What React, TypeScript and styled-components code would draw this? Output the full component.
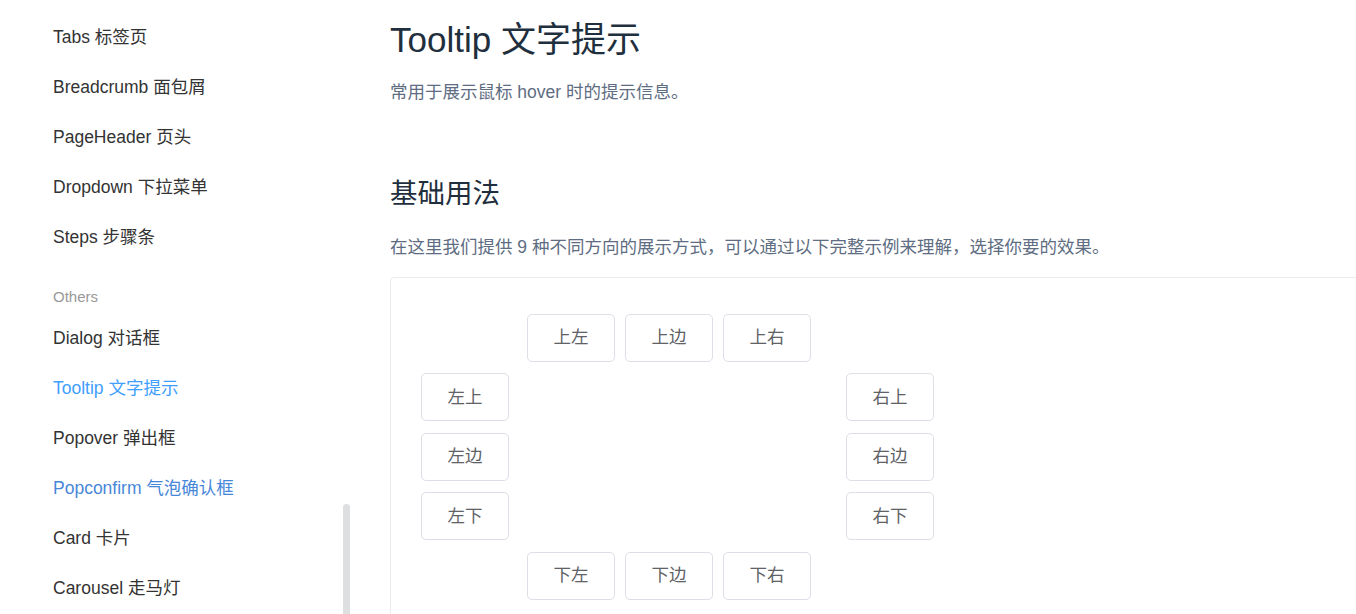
import React from "react";
import styled, { createGlobalStyle } from "styled-components";

const Global = createGlobalStyle`
  html, body { margin: 0; padding: 0; background: #fff; overflow: hidden; }
  body {
    font-family: "Liberation Sans", Arial, "Noto Sans CJK SC", sans-serif;
    -webkit-font-smoothing: antialiased;
  }
  * { box-sizing: border-box; }
`;

const Page = styled.div`
  display: flex;
  width: 1356px;
  height: 614px;
  overflow: hidden;
`;

const Sidebar = styled.aside`
  position: relative;
  flex: 0 0 350px;
  height: 614px;
  padding: 12px 0 0 53px;
`;

const NavItem = styled.div<{ $tone?: "active" | "hover" }>`
  height: 50px;
  line-height: 50px;
  font-size: 17.5px;
  white-space: nowrap;
  color: ${(p) =>
    p.$tone === "active" ? "#409eff" : p.$tone === "hover" ? "#4787d9" : "#333"};
`;

const GroupTitle = styled.div`
  margin: 24.5px 0 6.5px;
  height: 20px;
  line-height: 20px;
  font-size: 15px;
  color: #999;
`;

const ScrollThumb = styled.div`
  position: absolute;
  left: 343px;
  top: 504px;
  width: 7px;
  height: 130px;
  border-radius: 4px;
  background: #dedfe1;
`;

const Main = styled.main`
  flex: 1 1 auto;
  margin-left: 40px;
  min-width: 0;
`;

const Title = styled.h2`
  margin: 16px 0 0;
  font-size: 35px;
  line-height: 48px;
  font-weight: 400;
  color: #1f2f3d;
`;

const Lead = styled.p<{ $gap: number }>`
  margin: ${(p) => p.$gap}px 0 0;
  font-size: 17.5px;
  line-height: 26px;
  color: #5e6d82;
  white-space: nowrap;
`;

const Section = styled.h3`
  margin: 69px 0 0;
  font-size: 27.5px;
  line-height: 40px;
  font-weight: 400;
  color: #1f2f3d;
`;

const DemoBlock = styled.div`
  margin-top: 17.4px;
  width: 1000px;
  height: 400px;
  border: 1px solid #ebebeb;
  border-radius: 4px;
  padding: 36px 0 0 30px;
`;

const Board = styled.div`
  width: 513px;
  display: flex;
  flex-direction: column;
  gap: 11.5px;
`;

const EdgeRow = styled.div`
  display: flex;
  gap: 10px;
  padding-left: 106px;
`;

const SideRow = styled.div`
  display: flex;
  justify-content: space-between;
`;

const Btn = styled.button`
  width: 88px;
  height: 48px;
  padding: 0;
  border: 1px solid #dcdfe6;
  border-radius: 5px;
  background: #fff;
  color: #606266;
  font-family: inherit;
  font-size: 17.5px;
  line-height: 1;
  cursor: pointer;
`;

const navTop = ["Tabs 标签页", "Breadcrumb 面包屑", "PageHeader 页头", "Dropdown 下拉菜单", "Steps 步骤条"];
const navOthers: { label: string; tone?: "active" | "hover" }[] = [
  { label: "Dialog 对话框" },
  { label: "Tooltip 文字提示", tone: "active" },
  { label: "Popover 弹出框" },
  { label: "Popconfirm 气泡确认框", tone: "hover" },
  { label: "Card 卡片" },
  { label: "Carousel 走马灯" },
];

export default function App() {
  return (
    <>
      <Global />
      <Page>
        <Sidebar>
          {navTop.map((t) => (
            <NavItem key={t}>{t}</NavItem>
          ))}
          <GroupTitle>Others</GroupTitle>
          {navOthers.map((n) => (
            <NavItem key={n.label} $tone={n.tone}>
              {n.label}
            </NavItem>
          ))}
          <ScrollThumb />
        </Sidebar>
        <Main>
          <Title>Tooltip 文字提示</Title>
          <Lead $gap={14.5}>常用于展示鼠标 hover 时的提示信息。</Lead>
          <Section>基础用法</Section>
          <Lead $gap={20}>
            在这里我们提供 9 种不同方向的展示方式，可以通过以下完整示例来理解，选择你要的效果。
          </Lead>
          <DemoBlock>
            <Board>
              <EdgeRow>
                <Btn>上左</Btn>
                <Btn>上边</Btn>
                <Btn>上右</Btn>
              </EdgeRow>
              <SideRow>
                <Btn>左上</Btn>
                <Btn>右上</Btn>
              </SideRow>
              <SideRow>
                <Btn>左边</Btn>
                <Btn>右边</Btn>
              </SideRow>
              <SideRow>
                <Btn>左下</Btn>
                <Btn>右下</Btn>
              </SideRow>
              <EdgeRow>
                <Btn>下左</Btn>
                <Btn>下边</Btn>
                <Btn>下右</Btn>
              </EdgeRow>
            </Board>
          </DemoBlock>
        </Main>
      </Page>
    </>
  );
}
